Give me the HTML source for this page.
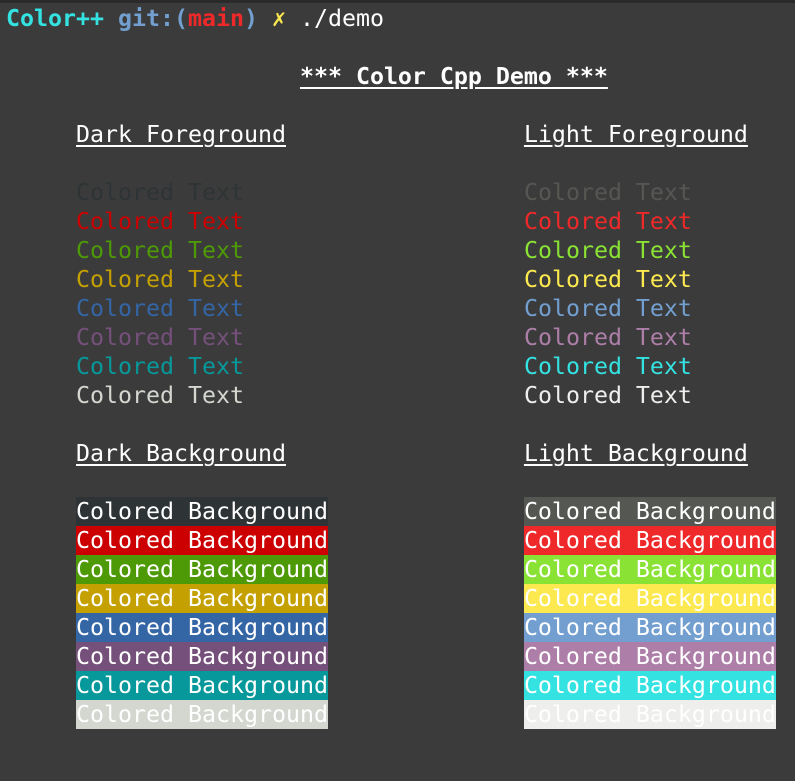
<!DOCTYPE html><html><head><style>
body{margin:0;width:795px;height:781px;background:#3b3b3b;overflow:hidden}
.top{position:absolute;left:0;top:0;width:795px;height:3px;background:#2a2a2a}
pre{position:absolute;left:6px;top:4px;margin:0;font-family:"DejaVu Sans Mono","Liberation Mono",monospace;font-size:23.26px;line-height:29px;color:#ffffff;white-space:pre}
u{text-decoration:underline;text-underline-offset:3px;text-decoration-thickness:2px}
b{font-weight:bold}
span.bg{display:inline-block;height:29px;vertical-align:top}
</style></head><body><div class="top"></div><pre><b style="color:#34e2e2">Color++</b> <b style="color:#729fcf">git:(</b><b style="color:#ef2929">main</b><b style="color:#729fcf">)</b> <span style="color:#fce94f">✗</span> ./demo

                     <b><u>*** Color Cpp Demo ***</u></b>

     <u>Dark Foreground</u>                 <u>Light Foreground</u>

     <span style="color:#2e3436">Colored Text</span>                    <span style="color:#555753">Colored Text</span>
     <span style="color:#cc0000">Colored Text</span>                    <span style="color:#ef2929">Colored Text</span>
     <span style="color:#4e9a06">Colored Text</span>                    <span style="color:#8ae234">Colored Text</span>
     <span style="color:#c4a000">Colored Text</span>                    <span style="color:#fce94f">Colored Text</span>
     <span style="color:#3465a4">Colored Text</span>                    <span style="color:#729fcf">Colored Text</span>
     <span style="color:#75507b">Colored Text</span>                    <span style="color:#ad7fa8">Colored Text</span>
     <span style="color:#06989a">Colored Text</span>                    <span style="color:#34e2e2">Colored Text</span>
     <span style="color:#d3d7cf">Colored Text</span>                    <span style="color:#eeeeec">Colored Text</span>

     <u>Dark Background</u>                 <u>Light Background</u>

     <span class="bg" style="background:#2e3436">Colored Background</span>              <span class="bg" style="background:#555753">Colored Background</span>
     <span class="bg" style="background:#cc0000">Colored Background</span>              <span class="bg" style="background:#ef2929">Colored Background</span>
     <span class="bg" style="background:#4e9a06">Colored Background</span>              <span class="bg" style="background:#8ae234">Colored Background</span>
     <span class="bg" style="background:#c4a000">Colored Background</span>              <span class="bg" style="background:#fce94f">Colored Background</span>
     <span class="bg" style="background:#3465a4">Colored Background</span>              <span class="bg" style="background:#729fcf">Colored Background</span>
     <span class="bg" style="background:#75507b">Colored Background</span>              <span class="bg" style="background:#ad7fa8">Colored Background</span>
     <span class="bg" style="background:#06989a">Colored Background</span>              <span class="bg" style="background:#34e2e2">Colored Background</span>
     <span class="bg" style="background:#d3d7cf">Colored Background</span>              <span class="bg" style="background:#eeeeec">Colored Background</span></pre></body></html>
